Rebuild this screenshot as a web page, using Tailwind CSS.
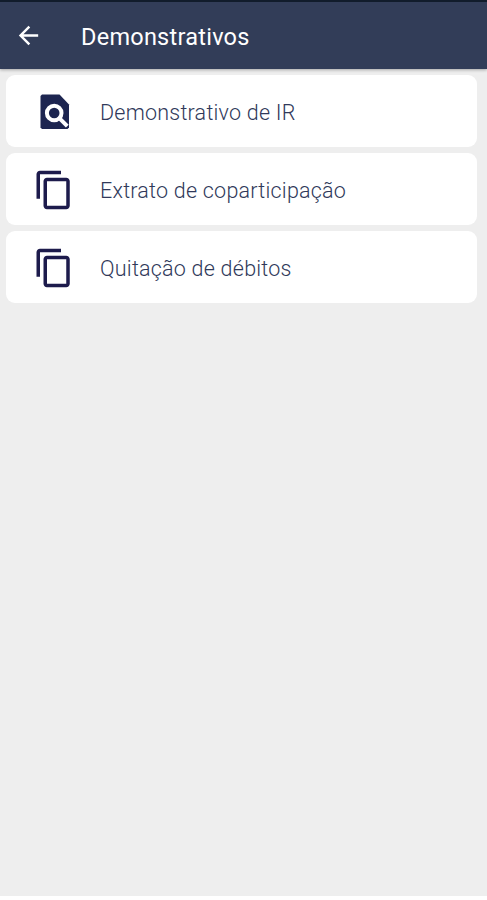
<!DOCTYPE html>
<html lang="pt-BR">
<head>
<meta charset="utf-8">
<title>Demonstrativos</title>
<script src="https://cdn.jsdelivr.net/npm/@tailwindcss/browser@4"></script>
</head>
<body class="bg-white font-[Roboto,sans-serif]">
<div class="flex h-[896px] w-[487px] flex-col bg-[#eeeeee]">
  <header class="flex h-[69px] shrink-0 items-center border-t-2 border-[#111c2b] bg-[#323d58] pl-[14px] text-white shadow-[0_1px_3px_rgba(0,0,0,0.3)]">
    <svg class="size-[29px] fill-current" viewBox="0 0 24 24"><path d="M20 11H7.83l5.59-5.59L12 4l-8 8 8 8 1.41-1.41L7.83 13H20v-2z"/></svg>
    <h1 class="ml-[38px] whitespace-nowrap pt-0.5 text-[23.5px] leading-7 tracking-[0.25px]">Demonstrativos</h1>
  </header>
  <main class="flex flex-col gap-1.5 pl-1.5 pr-2.5 pt-1.5 text-[#30395a]">
    <a class="flex h-[72px] items-center rounded-[9px] bg-white pl-[27px] pt-0.5">
      <svg class="size-[42px]" viewBox="0 0 42 42" fill="none"><path fill="#1d2550" d="M9 3.5h17.5L36 13.500V36.500L34.500 38H9l-1.500-1.500V5z"/><circle cx="21.200" cy="22" r="7.300" stroke="#fff" stroke-width="4"/><path stroke="#fff" stroke-width="4" d="M26.300 27.100l8 8"/></svg>
      <span class="ml-[25px] whitespace-nowrap pt-0.5 text-[21.5px] font-light leading-7 tracking-[0.23px]">Demonstrativo de IR</span>
    </a>
    <a class="flex h-[72px] items-center rounded-[9px] bg-white pl-[27px] pt-0.5">
      <svg class="size-[42px] fill-[#1d1b4c]" viewBox="0 0 24 24"><path d="M16 1H4c-1.1 0-2 .9-2 2v14h2V3h12V1zm3 4H8c-1.1 0-2 .9-2 2v14c0 1.1.9 2 2 2h11c1.1 0 2-.9 2-2V7c0-1.1-.9-2-2-2zm0 16H8V7h11v14z"/></svg>
      <span class="ml-[25px] whitespace-nowrap pt-0.5 text-[21.5px] font-light leading-7 tracking-[0.23px]">Extrato de coparticipação</span>
    </a>
    <a class="flex h-[72px] items-center rounded-[9px] bg-white pl-[27px] pt-0.5">
      <svg class="size-[42px] fill-[#1d1b4c]" viewBox="0 0 24 24"><path d="M16 1H4c-1.1 0-2 .9-2 2v14h2V3h12V1zm3 4H8c-1.1 0-2 .9-2 2v14c0 1.1.9 2 2 2h11c1.1 0 2-.9 2-2V7c0-1.1-.9-2-2-2zm0 16H8V7h11v14z"/></svg>
      <span class="ml-[25px] whitespace-nowrap pt-0.5 text-[21.5px] font-light leading-7 tracking-[0.23px]">Quitação de débitos</span>
    </a>
  </main>
</div>
</body>
</html>
